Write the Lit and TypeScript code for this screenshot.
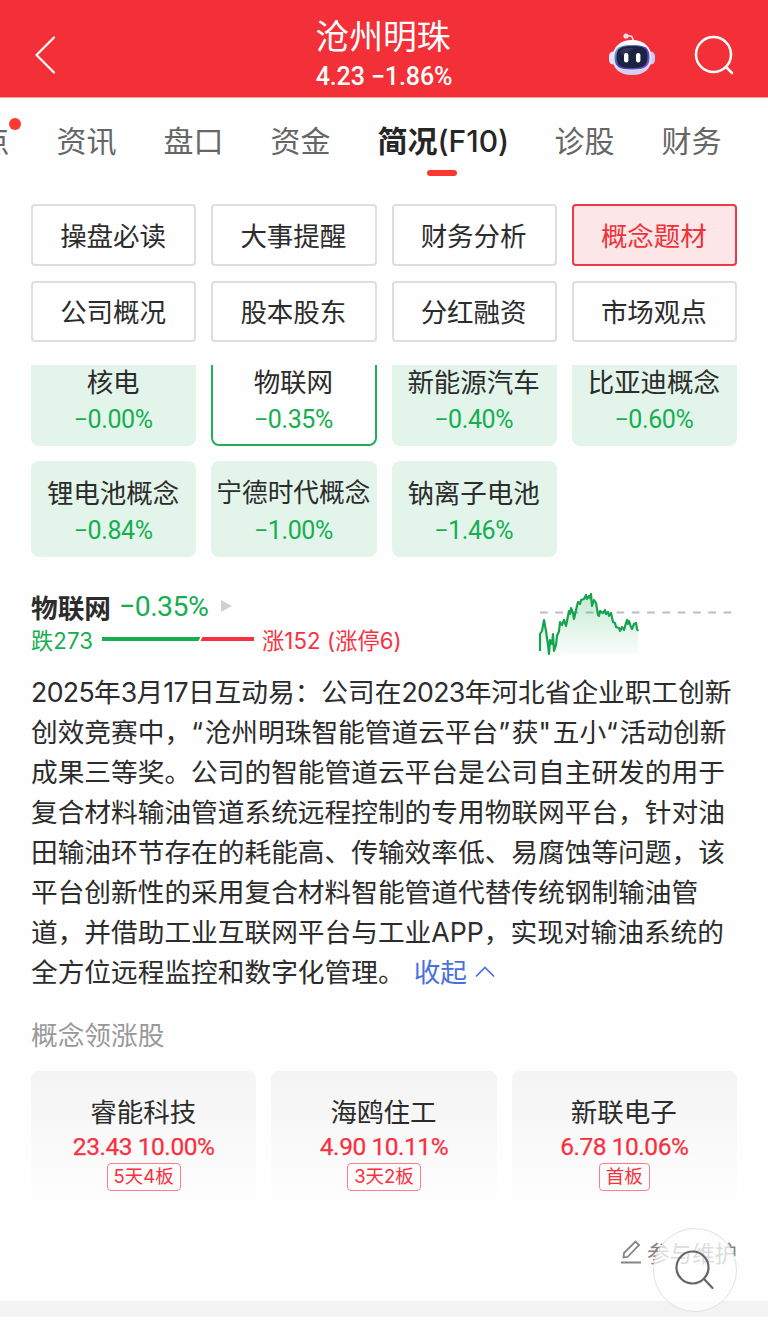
import { LitElement, html, css, svg } from "lit";
import { customElement } from "lit/decorators.js";
import { classMap } from "lit/directives/class-map.js";

const tabs = ["点", "资讯", "盘口", "资金", "简况(F10)", "诊股", "财务"];
const sections = ["操盘必读", "大事提醒", "财务分析", "概念题材", "公司概况", "股本股东", "分红融资", "市场观点"];
const concepts = [
  ["核电", "−0.00%"],
  ["物联网", "−0.35%"],
  ["新能源汽车", "−0.40%"],
  ["比亚迪概念", "−0.60%"],
  ["锂电池概念", "−0.84%"],
  ["宁德时代概念", "−1.00%"],
  ["钠离子电池", "−1.46%"],
];
const lines = [
  "2025年3月17日互动易：公司在2023年河北省企业职工创新",
  "创效竞赛中，“沧州明珠智能管道云平台”获\"五小“活动创新",
  "成果三等奖。公司的智能管道云平台是公司自主研发的用于",
  "复合材料输油管道系统远程控制的专用物联网平台，针对油",
  "田输油环节存在的耗能高、传输效率低、易腐蚀等问题，该",
  "平台创新性的采用复合材料智能管道代替传统钢制输油管",
  "道，并借助工业互联网平台与工业APP，实现对输油系统的",
];
const leaders = [
  ["睿能科技", "23.43 10.00%", "5天4板"],
  ["海鸥住工", "4.90 10.11%", "3天2板"],
  ["新联电子", "6.78 10.06%", "首板"],
];
const trend =
  "1,58 1,41 3,38 5,27 7,38 9,52 10,61 11,47 13,51 14,41 15,58 17,52 18,43 20,38 21,29 23,32 25,27 27,33 29,23 30,18 31,21 32,15 34,20 35,26 37,17 39,9 41,11 42,7 45,6 47,2 48,6 50,3 51,5 52,1 53,13 55,7 57,10 59,22 60,23 61,18 64,20 66,17 67,21 69,19 70,23 72,20 74,29 76,30 77,34 80,35 81,38 83,34 85,37 87,30 88,27 89,31 90,28 92,34 93,36 95,31 97,30 98,36 99,38";

@customElement("app-root")
export class AppRoot extends LitElement {
  static styles = css`
    :host { display: block; position: relative; width: 768px; height: 1323px; overflow: hidden; background: #fefefe; color: #2c2c2c; font-family: Inter, "Noto Sans CJK SC", sans-serif; }
    * { box-sizing: border-box; }
    svg { display: block; flex: none; }
    .num { font-family: Roboto, "Noto Sans CJK SC", sans-serif; }
    .header { height: 98px; background: #f32f37; border-bottom: 1px solid #f9a0a5; color: #fff; display: grid; grid-template-columns: 200px 1fr 200px; align-items: center; }
    .back { margin: 12px 0 0 34px; }
    .title { text-align: center; white-space: nowrap; padding-top: 11px; }
    .name { font-size: 33.8px; line-height: 46px; margin-left: -2px; }
    .quote { font-size: 25px; line-height: 34px; font-weight: 500; letter-spacing: -0.1px; }
    .tools { display: flex; gap: 38px; padding: 13px 0 0 41px; align-items: center; }
    .tabs { height: 106px; display: flex; gap: 47px; padding-top: 21px; margin-left: -20.5px; font-size: 30px; line-height: 44px; color: #666; white-space: nowrap; }
    .tab { position: relative; }
    .tab.active { color: #262626; font-weight: 600; width: 130px; }
    .tab.active .latin { font-weight: 500; }
    .tab.active::after { content: ""; position: absolute; left: 49.5px; top: 51px; width: 30px; height: 6px; border-radius: 3px; background: #fb3930; }
    .tab.dot::after { content: ""; position: absolute; left: 29.5px; top: -1px; width: 12px; height: 12px; border-radius: 6px; background: #fb3930; }
    .grid { display: grid; grid-template-columns: repeat(4, 1fr); gap: 15px; margin: 0 31px; }
    .section { height: 61.5px; border: 2px solid #dedede; border-radius: 4px; display: flex; align-items: center; justify-content: center; font-size: 26.5px; padding: 0 1px 1.5px 0; }
    .section.active { color: #f0313a; border-color: #ee3a42; background: #fde6e8; }
    .clip { margin-top: 22.500px; height: 192px; overflow: hidden; display: flex; flex-direction: column; justify-content: flex-end; }
    .concept { height: 96px; border-radius: 8px; background: #e3f5ea; text-align: center; white-space: nowrap; padding-top: 13px; }
    .concept.active { background: #fefefe; border: 2px solid #22ad5a; padding-top: 11px; }
    .cname { font-size: 26.5px; line-height: 38px; margin-left: -1px; }
    .cname.long { font-size: 25.7px; }
    .pct { font-size: 25px; line-height: 38px; color: #16ae51; letter-spacing: -0.4px; margin-left: -1px; }
    .detail { margin: 30px 31px 0; display: flex; justify-content: space-between; height: 75px; }
    .heading { display: flex; align-items: center; height: 39px; font-size: 26.7px; font-weight: 700; white-space: nowrap; }
    .heading .num { font-size: 28.5px; font-weight: 400; color: #16ae51; margin: 0 13px 0 8px; letter-spacing: -0.6px; }
    .counts { display: flex; align-items: center; height: 26px; font-size: 22.2px; white-space: nowrap; color: #f8303f; letter-spacing: 0.1px; }
    .fall { color: #16ae51; width: 62px; }
    .ratio { margin: 0 7px 0 8px; }
    .chart { margin: 6px 4px 0 0; }
    .text { margin: 10px 0 0 31px; font-size: 26.7px; line-height: 40.1px; white-space: nowrap; }
    .digits { letter-spacing: -0.65px; }
    .mark { letter-spacing: 1.8px; }
    .last { display: flex; align-items: center; }
    .fold { color: #4a6fe0; margin: 0 8px 0 9px; }
    .label { margin: 23px 31px 0; font-size: 26.7px; line-height: 40px; color: #999; }
    .leaders { margin: 16px 31px 0; display: grid; grid-template-columns: repeat(3, 1fr); gap: 15px; }
    .leader { height: 136px; border-radius: 8px; background: linear-gradient(#f4f4f4, #fefefe); display: flex; flex-direction: column; align-items: center; padding-top: 21.500px; }
    .price { color: #f8303f; font-size: 24.5px; line-height: 31px; letter-spacing: -0.45px; -webkit-text-stroke: 0.25px #f8303f; white-space: nowrap; }
    .badge { margin-top: 1px; height: 28px; padding: 0 6px; border: 1px solid #f8808a; border-radius: 4px; font-size: 18.5px; line-height: 25px; color: #f8303f; }
    .footer { display: flex; justify-content: flex-end; align-items: center; gap: 5px; padding-right: 31px; height: 36px; margin-top: 26.500px; color: #858585; font-size: 22.5px; }
    .bar { height: 16px; margin-top: 31px; background: #f3f3f3; }
    .float { position: absolute; left: 653px; top: 1228px; width: 84px; height: 84px; border-radius: 50%; border: 1.5px solid #e2e2e2; background: rgba(254, 254, 254, 0.72); display: flex; align-items: center; justify-content: center; }
  `;

  private robot() {
    return svg`
      <defs>
        <linearGradient id="shell" x1="0" y1="0" x2="0" y2="1"><stop offset="0" stop-color="#fff"/><stop offset="1" stop-color="#cfcdf1"/></linearGradient>
        <linearGradient id="rim" x1="0" y1="0" x2="1" y2="1"><stop offset="0" stop-color="#86b7e8"/><stop offset=".5" stop-color="#4a3fa8"/><stop offset="1" stop-color="#8754dd"/></linearGradient>
      </defs>
      <path d="M17 3h4q3 0 3 5" fill="none" stroke="#f2dfec" stroke-width="1.7"/>
      <circle cx="17" cy="3" r="2.6" fill="#e3e1f7"/>
      <rect x="0" y="18.5" width="9" height="13" rx="4.5" fill="#e4e2f7"/>
      <rect x="37" y="18.5" width="9" height="13" rx="4.5" fill="#c9c9f4"/>
      <path d="M23 7C35 7 42.500 14 42.500 25S35 42 23 42 3.500 36 3.500 25 11 7 23 7Z" fill="url(#shell)"/>
      <path d="M23 12c12 0 17.500 2 17.500 12S36 36.500 23 36.500 5.500 34 5.500 24 11 12 23 12Z" fill="url(#rim)"/>
      <path d="M23 13c11 0 15.500 2 15.500 11S34 35.200 23 35.200 7.500 33 7.500 24 12 13 23 13Z" fill="#1b2344"/>
      <path d="M11 18q5-4 14-3l-8 7q-4 1-6-4Z" fill="#3e4668" opacity=".55"/>
      <rect x="15" y="20" width="4.400" height="9.500" rx="2.200" fill="#fff"/>
      <rect x="27" y="20" width="4.400" height="9.500" rx="2.200" fill="#fff"/>`;
  }

  private line(text: string) {
    const parts = text.split(/(\d+|[“”"])/);
    return parts.map((p) => (/^\d/.test(p) ? html`<span class="digits">${p}</span>` : /^[“”"]/.test(p) ? html`<span class="mark">${p}</span>` : p));
  }

  render() {
    return html`
      <div class="header">
        <svg class="back" width="24" height="40" viewBox="0 0 24 40" fill="none" stroke="#fff" stroke-width="2.2" stroke-linecap="round" stroke-linejoin="round"><path d="M20 2.500 2.500 20 20 37.500"/></svg>
        <div class="title"><div class="name">沧州明珠</div><div class="quote num">4.23 −1.86%</div></div>
        <div class="tools">
          <svg width="47" height="44" viewBox="0 0 47 44">${this.robot()}</svg>
          <svg width="40" height="40" viewBox="0 0 40 40" fill="none" stroke="#fff" stroke-width="2.5" stroke-linecap="round"><circle cx="19.500" cy="19.500" r="17.500"/><path d="m32 32 6 6"/></svg>
        </div>
      </div>
      <div class="tabs">${tabs.map((t, i) => html`<div class=${classMap({ tab: true, dot: i === 0, active: i === 4 })}>${i === 4 ? html`简况<span class="latin">(F10)</span>` : t}</div>`)}</div>
      <div class="grid">${sections.map((s, i) => html`<div class=${classMap({ section: true, active: i === 3 })}>${s}</div>`)}</div>
      <div class="clip"><div class="grid">
        ${concepts.map(([n, p], i) => html`<div class=${classMap({ concept: true, active: i === 1 })}><div class=${classMap({ cname: true, long: n.length > 5 })}>${n}</div><div class="pct num">${p}</div></div>`)}
      </div></div>
      <div class="detail">
        <div>
          <div class="heading">物联网<span class="num">−0.35%</span><svg width="11" height="14" viewBox="0 0 11 14"><path d="M0 1v12l11-6Z" fill="#d0d0d0"/></svg></div>
          <div class="counts"><span class="fall">跌273</span>
            <svg class="ratio" width="154" height="6" viewBox="0 0 154 6"><path d="M1 1h98.500l-2 4H1Z" fill="#16ae51"/><path d="M101.500 1H153v4H99.500Z" fill="#f8303f"/></svg>
            <span>涨152 (涨停6)</span></div>
        </div>
        <svg class="chart" width="194" height="62" viewBox="0 0 194 62">
          <defs><linearGradient id="area" x1="0" y1="0" x2="0" y2="1"><stop offset="0" stop-color="#16ae51" stop-opacity=".25"/><stop offset="1" stop-color="#16ae51" stop-opacity=".02"/></linearGradient></defs>
          <path d="M1 19.500H193" stroke="#bdbdbd" stroke-width="1.8" stroke-dasharray="7.700 7.600"/>
          <polygon points="1,61 ${trend} 99,61" fill="url(#area)"/>
          <polyline points=${trend} fill="none" stroke="#16a350" stroke-width="2.2" stroke-linejoin="round"/>
        </svg>
      </div>
      <div class="text">
        ${lines.map((l) => html`<div>${this.line(l)}</div>`)}
        <div class="last">全方位远程监控和数字化管理。<span class="fold">收起</span><svg width="20" height="12" viewBox="0 0 20 12" fill="none" stroke="#4a6fe0" stroke-width="1.7"><path d="m1 10.500 9-9 9 9"/></svg></div>
      </div>
      <div class="label">概念领涨股</div>
      <div class="leaders">${leaders.map(([n, p, b]) => html`<div class="leader"><div class="cname">${n}</div><div class="price num">${p}</div><div class="badge">${b}</div></div>`)}</div>
      <div class="footer"><svg width="22" height="24" viewBox="0 0 22 24" fill="none" stroke="#858585" stroke-width="1.8"><path d="M1 22.500h20M3.500 17.500l.5-4.500L15.500 1.500l3.500 3.500L7.500 17Z"/></svg>参与维护</div>
      <div class="bar"></div>
      <div class="float"><svg width="40" height="40" viewBox="0 0 40 40" fill="none" stroke="#666" stroke-width="2.200" stroke-linecap="round"><circle cx="17.500" cy="17.500" r="16"/><path d="m29.500 29.500 8 8.500"/></svg></div>
    `;
  }
}
